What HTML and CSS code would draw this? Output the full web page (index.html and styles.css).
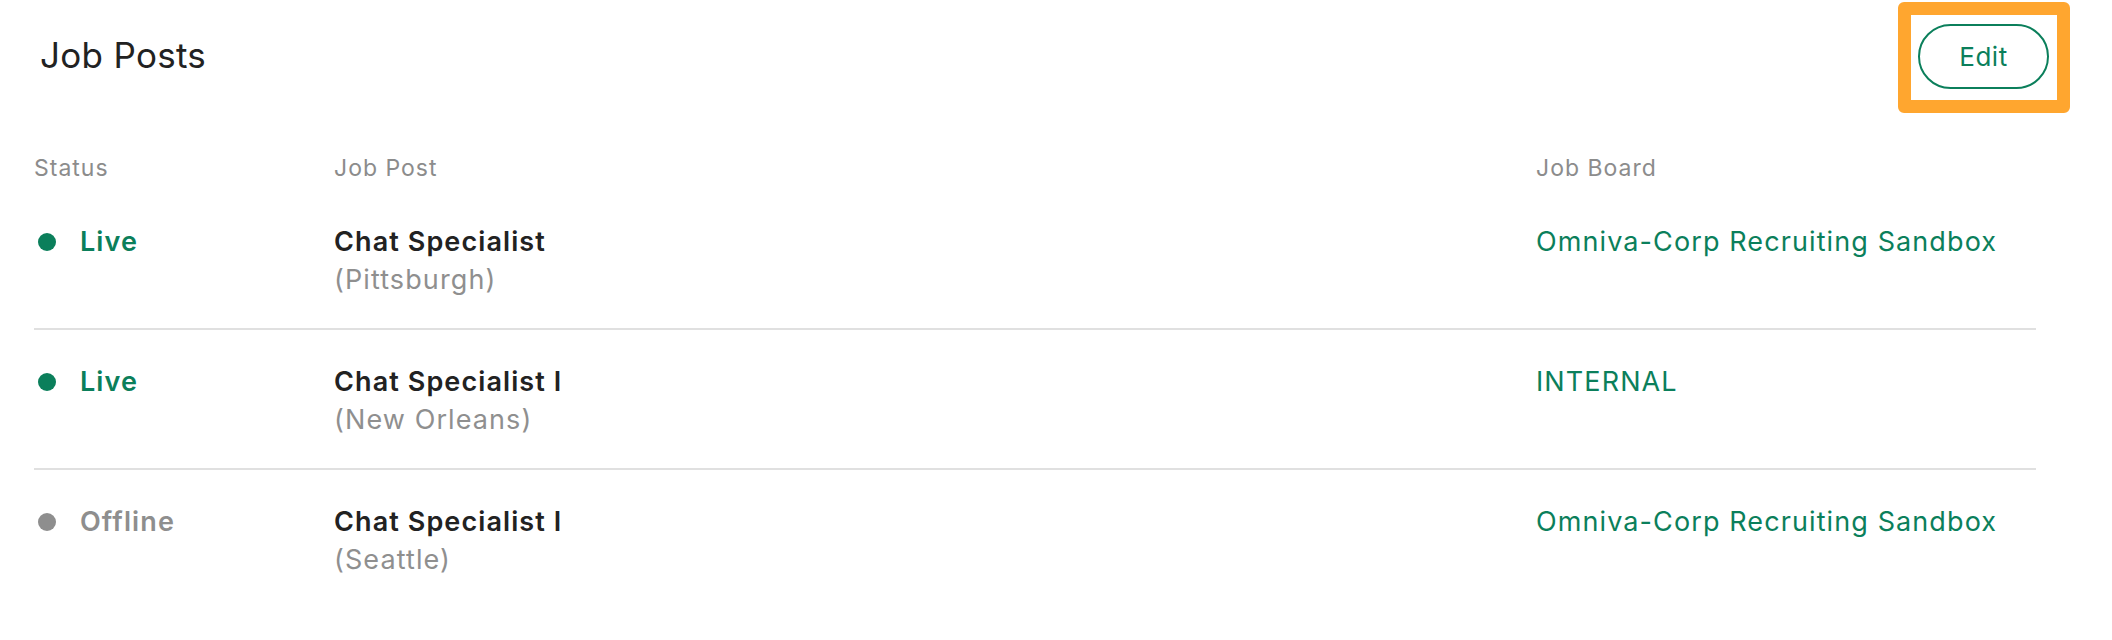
FILE: index.html
```html
<!DOCTYPE html>
<html lang="en">
<head>
	<meta charset="UTF-8">
	<title>Job Posts</title>
	<link rel="stylesheet" href="styles.css">
</head>
<body>
	<div class="topbar">
		<h2 class="title">Job Posts</h2>
		<div class="edit-wrap">
			<button class="edit-btn">Edit</button>
			<span class="highlight"></span>
		</div>
	</div>
	<div class="posts">
		<div class="row head">
			<div>Status</div>
			<div>Job Post</div>
			<div>Job Board</div>
		</div>
		<div class="row">
			<div class="status live"><span class="dot"></span>Live</div>
			<div class="post">
				<div class="name">Chat Specialist</div>
				<div class="loc">(Pittsburgh)</div>
			</div>
			<div class="board">Omniva-Corp Recruiting Sandbox</div>
		</div>
		<div class="row">
			<div class="status live"><span class="dot"></span>Live</div>
			<div class="post">
				<div class="name">Chat Specialist I</div>
				<div class="loc">(New Orleans)</div>
			</div>
			<div class="board">INTERNAL</div>
		</div>
		<div class="row">
			<div class="status offline"><span class="dot"></span>Offline</div>
			<div class="post">
				<div class="name">Chat Specialist I</div>
				<div class="loc">(Seattle)</div>
			</div>
			<div class="board">Omniva-Corp Recruiting Sandbox</div>
		</div>
	</div>
</body>
</html>
```

FILE: styles.css
```css
	*{
		margin:0px;
		padding:0px;
		box-sizing:border-box;
	}
	body{
		font-family:Inter, "Liberation Sans", sans-serif;
		color:#222222;
		background:#ffffff;
	}
	.topbar{
		display:flex;
		justify-content:space-between;
		align-items:center;
		height:65px;
		margin-top:24px;
		padding-left:40px;
		padding-right:63px;
	}
	.title{
		font-size:35px;
		font-weight:400;
		line-height:42px;
		letter-spacing:0.3px;
		margin-top:-4px;
	}
	.edit-wrap{
		position:relative;
	}
	.edit-btn{
		display:block;
		width:131px;
		height:65px;
		border:2px solid #0b7f5b;
		border-radius:33px;
		background:#ffffff;
		color:#0b7f5b;
		font-family:Inter, "Liberation Sans", sans-serif;
		font-size:26px;
		font-weight:400;
		letter-spacing:0.5px;
	}
	/* annotation box drawn over the button */
	.highlight{
		position:absolute;
		left:-20px;
		top:-22px;
		width:172px;
		height:111px;
		border:13px solid #ffa62f;
		border-radius:6px;
	}
	.posts{
		margin-top:64px;
		margin-left:34px;
		width:2002px;
	}
	.row{
		display:grid;
		grid-template-columns:300px 1202px 1fr;
		padding:33px 0px 29px;
		border-bottom:2px solid #e0e0e0;
		font-size:27px;
		line-height:38px;
		letter-spacing:1.1px;
	}
	.row:last-child{
		border-bottom:none;
	}
	.row.head{
		padding:0px 0px 7px;
		border-bottom:none;
		font-size:23px;
		line-height:30px;
		letter-spacing:1px;
		color:#8c8c8c;
	}
	.status{
		display:flex;
		align-items:center;
		height:38px;
		font-weight:600;
	}
	.dot{
		width:18px;
		height:18px;
		border-radius:50%;
		margin-left:4px;
		margin-right:24px;
	}
	.live{
		color:#0b7f5b;
	}
	.live .dot{
		background:#0b7f5b;
	}
	.offline{
		color:#8e8e8e;
	}
	.offline .dot{
		background:#8e8e8e;
	}
	.name{
		font-weight:600;
	}
	.loc{
		color:#8f8f8f;
	}
	.board{
		color:#0b7f5b;
	}
```
